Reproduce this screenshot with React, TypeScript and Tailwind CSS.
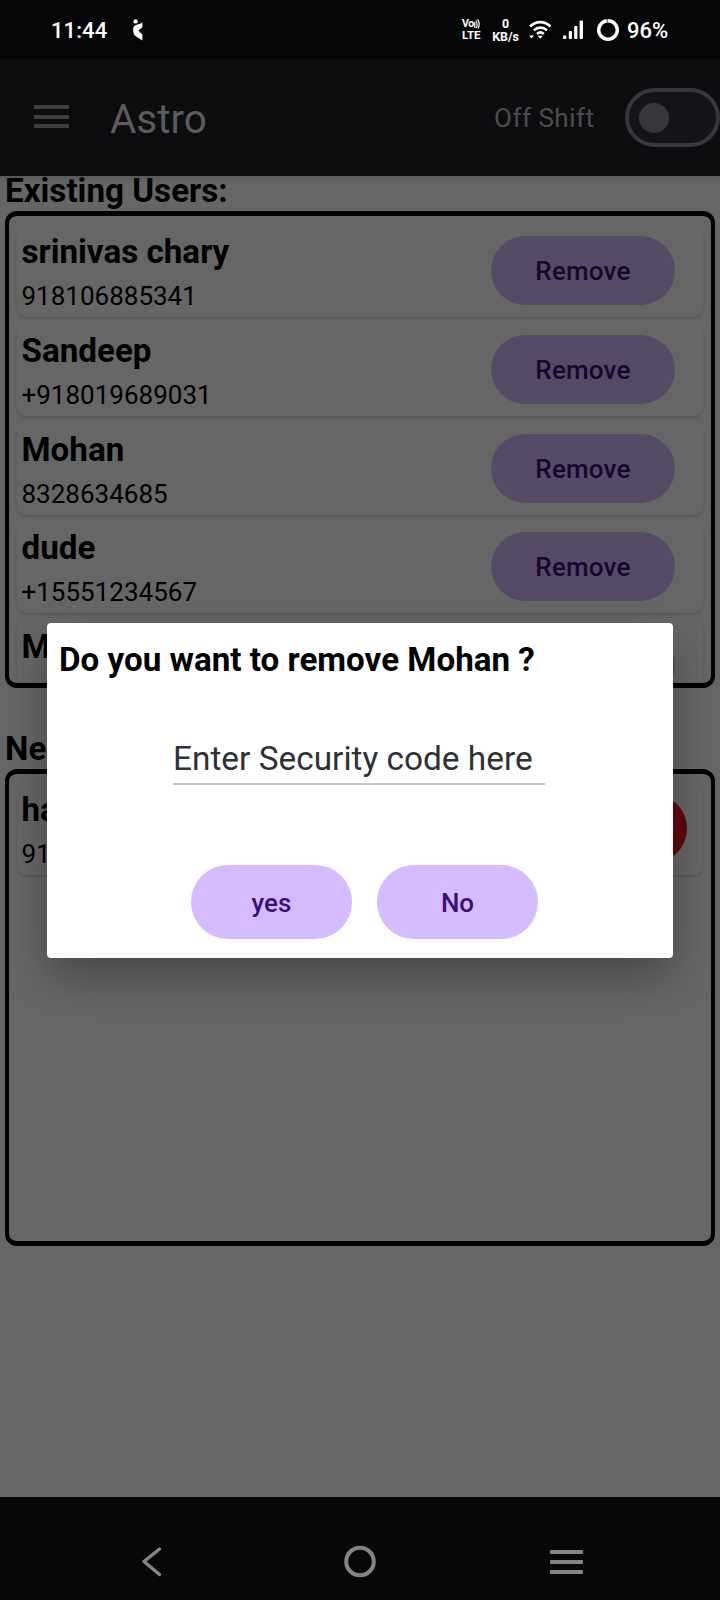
import React from "react";

type User = { name: string; phone: string };

const existingUsers: User[] = [
  { name: "srinivas chary", phone: "918106885341" },
  { name: "Sandeep", phone: "+918019689031" },
  { name: "Mohan", phone: "8328634685" },
  { name: "dude", phone: "+15551234567" },
  { name: "M", phone: "" },
];

const newUsers: User[] = [{ name: "ha", phone: "91" }];

function StatusBar() {
  return (
    <div className="flex h-[59px] items-center bg-[#060608] pl-[51px] pr-[50px] text-white">
      <span className="w-[56px] whitespace-nowrap pt-[2px] text-[22px] font-medium leading-[26px] tracking-[0.1px]">11:44</span>
      <svg className="ml-[25px] h-[24px] w-[12px]" viewBox="0 0 12 24" fill="#fff">
        <circle cx="3.6" cy="3.4" r="2.2" />
        <path d="M10.4 4.2 V9.2 L6.4 12.6 L10.4 16.6 V22.6 L4 18.4 C1.8 16.6 1.2 15.4 1.2 12.4 C1.2 9 1.6 8 4.6 6.8 C7.4 6 8.8 5.6 10.4 4.2 Z" />
      </svg>
      <div className="ml-auto flex items-center">
        <div className="flex w-[19px] flex-col">
          <div className="flex h-[11px] items-center">
            <span className="text-[10.5px] font-bold leading-[10px] tracking-[-0.3px]">Vo</span>
            <svg className="h-[10px] w-[6px] shrink-0" viewBox="0 0 6 10" fill="none" stroke="#fff" strokeWidth="1.2">
              <path d="M0.8 3 V9 M2 1.5 Q4 5 2.4 9 M3.6 0.3 Q6.6 5 4 9.5" />
            </svg>
          </div>
          <span className="text-[11.5px] font-bold leading-[11px]">LTE</span>
        </div>
        <div className="ml-[11px] flex w-[27px] flex-col items-center whitespace-nowrap pt-px text-[12.4px] font-bold leading-[13px]">
          <span>0</span>
          <span>KB/s</span>
        </div>
        <svg className="ml-[9px] h-[20px] w-[24px]" viewBox="0 0 24 20" fill="none" stroke="#fff" strokeWidth="2.6">
          <path d="M2 6.5 C8 0.6 16.5 0.6 22.5 6.5" />
          <path d="M5.8 10.4 C9.8 6.7 15.2 6.7 19 10.4" />
          <path d="M9 14 C11 12.2 13.8 12.2 15.8 14" />
          <path d="M1 15.5 H6 L3.5 18.5 Z M9.6 15.8 H15 L12.3 18.8 Z" fill="#fff" stroke="none" />
        </svg>
        <svg className="ml-[10px] h-[20px] w-[22px]" viewBox="0 0 22 20" fill="#fff">
          <rect x="1" y="15.4" width="3.4" height="3.6" rx="1" />
          <rect x="6.8" y="11" width="3.2" height="8" rx="0.8" />
          <rect x="12.2" y="6" width="3.2" height="13" rx="0.8" />
          <rect x="17.6" y="0.5" width="3.4" height="18.5" rx="0.8" />
        </svg>
        <svg className="ml-[12px] h-[24px] w-[24px]" viewBox="0 0 24 24" fill="none">
          <circle cx="12" cy="12" r="9.3" stroke="#fff" strokeWidth="3.4" />
          <path d="M11.4 1 V4.6" stroke="#777" strokeWidth="1.4" />
        </svg>
        <span className="ml-[7px] w-[43px] whitespace-nowrap pt-[2px] text-[22px] font-medium leading-[26px]">96%</span>
      </div>
    </div>
  );
}

function AppBar() {
  return (
    <header className="flex h-[117px] items-center bg-[#0d0d0f]">
      <div className="mb-[2px] ml-[34px] flex w-[35px] flex-col gap-[5.5px]">
        <span className="h-[4px] bg-[#3f3f41]" />
        <span className="h-[4px] bg-[#3f3f41]" />
        <span className="h-[4px] bg-[#3f3f41]" />
      </div>
      <h1 className="ml-[41px] pt-[5px] text-[40.4px] leading-[48px] text-[#5c5c5e]">Astro</h1>
      <span className="ml-auto w-[101px] whitespace-nowrap text-[26px] leading-[30px] tracking-[0.5px] text-[#4d4d50]">Off Shift</span>
      <div className="ml-[30px] flex h-[59px] w-[95px] items-center rounded-full border-4 border-[#38373b] bg-[#151519] pl-[10px]">
        <span className="h-[30px] w-[30px] rounded-full bg-[#38373b]" />
      </div>
    </header>
  );
}

function UserCard({ user, isNew }: { user: User; isNew?: boolean }) {
  return (
    <div
      className={
        "flex h-[94px] shrink-0 items-start rounded-[10px] bg-[#666] pl-[5px] pt-[10px] shadow-[0_2px_3px_rgba(0,0,0,0.14)] " +
        (isNew ? "pr-[16px]" : "pr-[28px]")
      }
    >
      <div className="flex grow flex-col gap-[10px] whitespace-nowrap text-black">
        <span className="text-[33.2px] font-bold leading-[38px]">{user.name}</span>
        <span className="text-[26px] leading-[30px]">{user.phone}</span>
      </div>
      {isNew ? (
        <button className="mt-[3px] h-[69px] w-[184px] rounded-full bg-[#60070e]" aria-label="Reject" />
      ) : (
        <button className="mt-[3px] h-[69px] w-[184px] rounded-full bg-[#554b66] pt-[2px] text-[26px] font-medium tracking-[0.2px] text-[#180631]">
          Remove
        </button>
      )}
    </div>
  );
}

function UserList({ title, users, isNew }: { title: string; users: User[]; isNew?: boolean }) {
  return (
    <section className="flex flex-col gap-[5px] px-[5px]">
      <h2 className="text-[33.2px] font-bold leading-[30px] text-black">{title}</h2>
      <div className="flex h-[476.5px] flex-col gap-[4.6px] overflow-hidden rounded-[12px] border-x-4 border-y-5 border-black px-[8px] pl-[7.5px] pt-[7.4px]">
        {users.map((u) => (
          <UserCard key={u.name} user={u} isNew={isNew} />
        ))}
      </div>
    </section>
  );
}

function RemoveDialog() {
  return (
    <div className="absolute left-[47px] top-[623px] flex h-[335px] w-[626px] flex-col rounded-[4px] bg-white shadow-[0_20px_44px_rgba(0,0,0,0.28)]">
      <h3 className="ml-[12px] mt-[18px] whitespace-nowrap text-[33.2px] font-bold leading-[38px] text-black">Do you want to remove Mohan ?</h3>
      <div className="ml-[126px] mt-[61px] h-[45px] w-[372px] whitespace-nowrap border-b-2 border-[#c6c5ca] text-[33.4px] leading-[38px] text-[#2f3034]">
        Enter Security code here
      </div>
      <div className="ml-[144px] mt-[80px] flex gap-[25px] text-[26px] font-medium text-[#3b0f7a]">
        <button className="h-[74px] w-[161px] rounded-full bg-[#d5bbff] pt-[2px]">yes</button>
        <button className="h-[74px] w-[161px] rounded-full bg-[#d5bbff] pt-[2px]">No</button>
      </div>
    </div>
  );
}

function NavigationBar() {
  return (
    <nav className="flex h-[103px] items-center bg-[#08080a] pl-[139px] pr-[137px] pt-[26px]">
      <svg className="h-[34px] w-[24px]" viewBox="0 0 24 34" fill="none" stroke="#858587" strokeWidth="3.4" strokeLinecap="round" strokeLinejoin="round">
        <path d="M20.5 4 L5 16.5 L20.5 29.5" />
      </svg>
      <svg className="ml-[180px] h-[34px] w-[34px]" viewBox="0 0 34 34" fill="none" stroke="#858587" strokeWidth="4">
        <circle cx="17" cy="16.5" r="13.8" />
      </svg>
      <div className="ml-auto flex w-[33px] flex-col gap-[6px]">
        <span className="h-[4px] rounded-[1px] bg-[#858587]" />
        <span className="h-[4px] rounded-[1px] bg-[#858587]" />
        <span className="h-[4px] rounded-[1px] bg-[#858587]" />
      </div>
    </nav>
  );
}

export default function App() {
  return (
    <div className="relative flex h-[1600px] w-[720px] flex-col overflow-hidden bg-[#666] font-['Roboto',sans-serif]">
      <StatusBar />
      <AppBar />
      <main className="flex grow flex-col gap-[46.5px] bg-[linear-gradient(#5a5a5a,#666_8px)]">
        <UserList title="Existing Users:" users={existingUsers} />
        <UserList title="Ne" users={newUsers} isNew />
      </main>
      <NavigationBar />
      <RemoveDialog />
    </div>
  );
}
